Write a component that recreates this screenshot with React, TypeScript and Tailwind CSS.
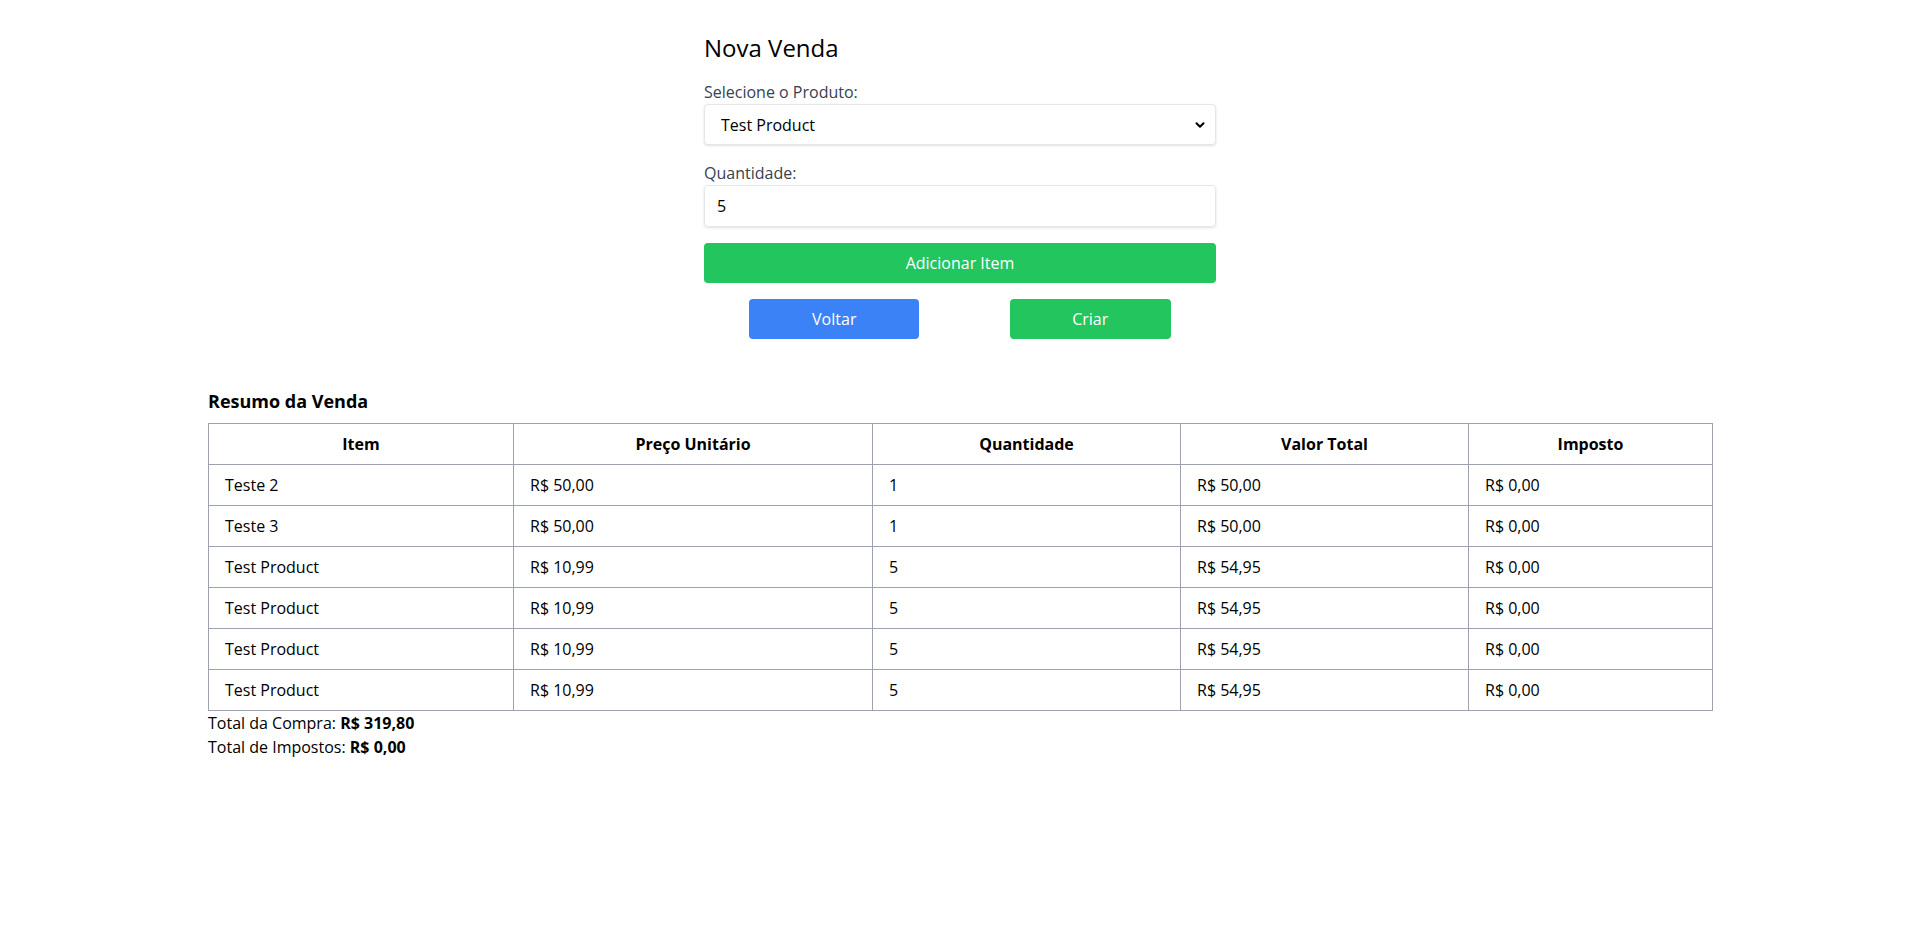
import React, { useState } from 'react';
import { ChevronDown } from 'lucide-react';

type Item = { nome: string; preco: number; quantidade: number; imposto: number };

const itens: Item[] = [
  { nome: 'Teste 2', preco: 50, quantidade: 1, imposto: 0 },
  { nome: 'Teste 3', preco: 50, quantidade: 1, imposto: 0 },
  { nome: 'Test Product', preco: 10.99, quantidade: 5, imposto: 0 },
  { nome: 'Test Product', preco: 10.99, quantidade: 5, imposto: 0 },
  { nome: 'Test Product', preco: 10.99, quantidade: 5, imposto: 0 },
  { nome: 'Test Product', preco: 10.99, quantidade: 5, imposto: 0 },
];

const brl = (v: number) => 'R$ ' + v.toFixed(2).replace('.', ',');

export default function App() {
  const [produto, setProduto] = useState('test');
  const [quantidade, setQuantidade] = useState('5');

  const totalCompra = itens.reduce((s, i) => s + i.preco * i.quantidade, 0);
  const totalImpostos = itens.reduce((s, i) => s + i.imposto, 0);

  return (
    <div className="min-h-screen bg-white text-base text-black font-['Segoe_UI','Open_Sans',sans-serif]">
      <div className="max-w-[512px] mx-auto pt-8 pb-8">
        <h1 className="text-2xl mb-4">Nova Venda</h1>

        <div className="mb-4">
          <label className="block text-[#374151]">Selecione o Produto:</label>
          <div className="relative">
            <select
              value={produto}
              onChange={(e) => setProduto(e.target.value)}
              className="appearance-none w-full h-[41px] pl-4 pr-8 border border-[#e5e7eb] rounded shadow-sm bg-white"
            >
              <option value="test">Test Product</option>
              <option value="t2">Teste 2</option>
              <option value="t3">Teste 3</option>
            </select>
            <ChevronDown className="absolute right-[9px] top-[14px] w-[14px] h-[14px] pointer-events-none" strokeWidth={3.5} />
          </div>
        </div>

        <div className="mb-4">
          <label className="block text-[#374151]">Quantidade:</label>
          <input
            type="number"
            value={quantidade}
            onChange={(e) => setQuantidade(e.target.value)}
            className="w-full px-3 py-2 border border-[#e5e7eb] rounded shadow-sm"
          />
        </div>

        <button className="w-full bg-[#22c55e] text-white py-2 rounded">Adicionar Item</button>

        <div className="flex justify-around mt-4">
          <button className="w-[170px] bg-[#3b82f6] text-white py-2 rounded">Voltar</button>
          <button className="w-[161px] bg-[#22c55e] text-white py-2 rounded">Criar</button>
        </div>
      </div>

      <div className="container mx-auto p-4">
        <h2 className="text-lg font-bold mb-2">Resumo da Venda</h2>
        <table className="w-full table-fixed border-collapse border border-[#9ca3af]">
          <colgroup>
            <col className="w-[305px]" />
            <col className="w-[359px]" />
            <col className="w-[308px]" />
            <col className="w-[288px]" />
            <col className="w-[244px]" />
          </colgroup>
          <thead>
            <tr>
              <th className="border border-[#9ca3af] px-4 py-2">Item</th>
              <th className="border border-[#9ca3af] px-4 py-2">Preço Unitário</th>
              <th className="border border-[#9ca3af] px-4 py-2">Quantidade</th>
              <th className="border border-[#9ca3af] px-4 py-2">Valor Total</th>
              <th className="border border-[#9ca3af] px-4 py-2">Imposto</th>
            </tr>
          </thead>
          <tbody>
            {itens.map((item, idx) => (
              <tr key={idx}>
                <td className="border border-[#9ca3af] px-4 py-2">{item.nome}</td>
                <td className="border border-[#9ca3af] px-4 py-2">{brl(item.preco)}</td>
                <td className="border border-[#9ca3af] px-4 py-2">{item.quantidade}</td>
                <td className="border border-[#9ca3af] px-4 py-2">{brl(item.preco * item.quantidade)}</td>
                <td className="border border-[#9ca3af] px-4 py-2">{brl(item.imposto)}</td>
              </tr>
            ))}
          </tbody>
        </table>
        <p>
          Total da Compra: <strong>{brl(totalCompra)}</strong>
        </p>
        <p>
          Total de Impostos: <strong>{brl(totalImpostos)}</strong>
        </p>
      </div>
    </div>
  );
}
